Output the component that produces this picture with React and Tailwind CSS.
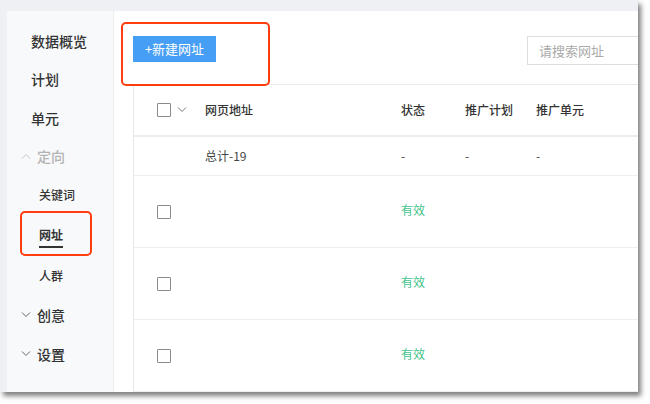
import React from 'react';

const FONT = { fontFamily: '"Noto Sans CJK SC", "Noto Sans", sans-serif' };

const Chevron = ({ up = false, className = '' }) => (
  <svg width="10" height="6" viewBox="0 0 10 6" className={className}>
    <path
      d={up ? 'M1 5.5 L5 1.5 L9 5.5' : 'M1 0.5 L5 4.5 L9 0.5'}
      fill="none"
      stroke="currentColor"
      strokeWidth="1"
    />
  </svg>
);

const Checkbox = () => (
  <span className="inline-block w-[14px] h-[14px] border border-[#8a8a8a] bg-white rounded-[1px]" />
);

const rows = [1, 2, 3];

const Sidebar = () => (
  <div className="relative w-[107px] shrink-0 bg-[#f8f9fb] border-r border-[#eceef1] text-[#333] pt-[11px]">
    <div className="text-[14px] font-medium leading-[20px]">
      <div className="h-[38px] flex items-center pl-[24px]">数据概览</div>
      <div className="h-[38px] flex items-center pl-[24px]">计划</div>
      <div className="h-[39px] flex items-center pl-[24px]">单元</div>
      <div className="h-[38px] flex items-center pl-[14px] gap-[6px] text-[#b3b3b3]">
        <Chevron up className="text-[#c8c8c8]" />
        <span>定向</span>
      </div>
      <div className="h-[40px] flex items-center pl-[32px] text-[12px]">关键词</div>
      <div className="h-[41px] flex items-center pl-[32px] text-[12px] font-semibold">
        <span className="inline-block border-b-2 border-[#333] pt-[4px] pb-[3px] leading-[16px]">网址</span>
      </div>
      <div className="h-[39px] flex items-center pl-[32px] text-[12px]">人群</div>
      <div className="h-[39px] flex items-center pl-[14px] gap-[6px]">
        <Chevron className="text-[#666]" />
        <span>创意</span>
      </div>
      <div className="h-[39px] flex items-center pl-[14px] gap-[6px]">
        <Chevron className="text-[#666]" />
        <span>设置</span>
      </div>
    </div>
    {/* highlight around the active item */}
    <div className="absolute left-[13px] top-[200px] w-[72px] h-[45px] border-2 border-[#ff3d0f] rounded-[5px]" />
  </div>
);

const cols = 'grid grid-cols-[71px_196px_64px_71px_120px] items-center';

const Table = () => (
  <div className="w-[520px] border-l border-t border-[#e9e9e9] text-[12px]">
    <div className={`${cols} h-[52px] border-b-2 border-[#ececec] font-medium text-[#333]`}>
      <div className="flex items-center pl-[23px] gap-[6px]">
        <Checkbox />
        <Chevron className="text-[#777]" />
      </div>
      <div>网页地址</div>
      <div>状态</div>
      <div>推广计划</div>
      <div>推广单元</div>
    </div>
    <div className={`${cols} h-[39px] border-b border-[#eeeeee] text-[#444]`}>
      <div />
      <div>总计-19</div>
      <div>-</div>
      <div>-</div>
      <div>-</div>
    </div>
    {rows.map((r) => (
      <div key={r} className={`${cols} h-[72px] border-b border-[#eeeeee]`}>
        <div className="pl-[23px] flex items-center">
          <Checkbox />
        </div>
        <div />
        <div className="text-[#43c48d] -mt-[4px]">有效</div>
        <div />
        <div />
      </div>
    ))}
  </div>
);

export default function App() {
  return (
    <div className="w-[650px] h-[404px] bg-white overflow-hidden" style={FONT}>
      <div className="relative w-[638px] h-[392px] bg-[#eef0f4] pt-[11px] pl-[7px] overflow-hidden shadow-[3px_4px_5px_rgba(0,0,0,0.5)]">
        <div className="flex h-full">
          <Sidebar />
          <div className="flex-1 bg-white pl-[19px] pt-[25px] overflow-hidden">
            <div className="flex items-start h-[48px]">
              <button className="shrink-0 w-[83px] h-[26px] bg-[#479ef5] text-white text-[13px] leading-[26px] text-center">
                +新建网址
              </button>
              <div className="shrink-0 ml-[311px] w-[130px] h-[29px] border border-[#dedede] flex items-center pl-[11px] text-[13px] text-[#aaa]">
                请搜索网址
              </div>
            </div>
            <Table />
          </div>
        </div>
        {/* highlight around the create button */}
        <div className="absolute left-[121px] top-[22px] w-[149px] h-[64px] border-2 border-[#ff3d0f] rounded-[5px]" />
      </div>
    </div>
  );
}
